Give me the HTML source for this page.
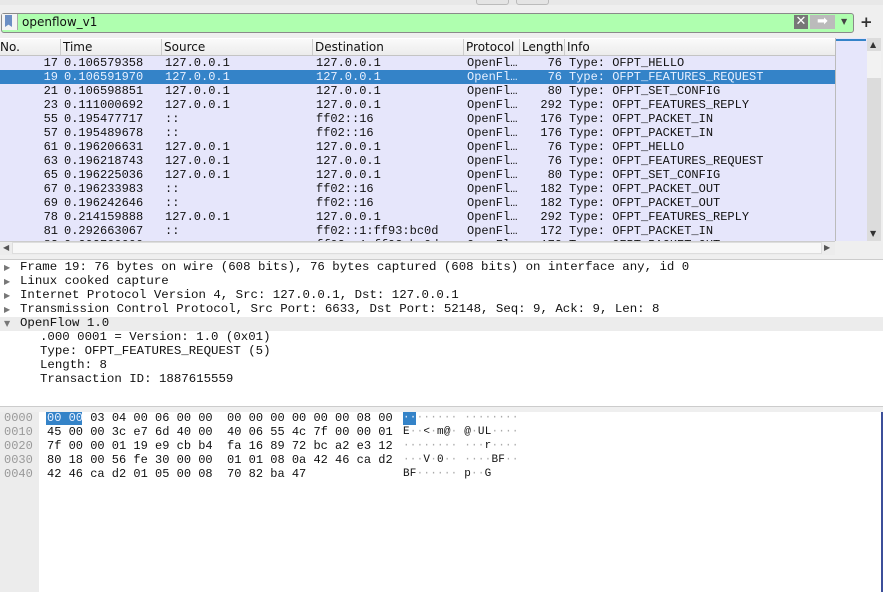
<!DOCTYPE html>
<html><head><style>
body{margin:0;width:883px;height:592px;background:#efefef;position:relative;overflow:hidden;font-family:"Liberation Mono","DejaVu Sans Mono",monospace;font-size:12px;color:#111}
.a{position:absolute}
.sans{font-family:"DejaVu Sans","Liberation Sans",sans-serif}
.row{position:absolute;left:0;width:835px;height:14px;line-height:14px;background:#e6e6fb;white-space:pre}
.row.sel{background:#3483c8;color:#e8f0ff}
.row span{position:absolute;top:0}
.dl{position:absolute;left:20px;height:14px;line-height:14px;white-space:pre;font-size:12.4px}
.ar{position:absolute;left:4px;font:8px/14px 'DejaVu Sans';color:#777}
.dot{color:#aaa}
</style></head><body>
<div class="a" style="left:0;top:0;width:883px;height:5px;background:#e8e8e8"></div>
<div class="a" style="left:476px;top:-4px;width:31px;height:7px;border:1px solid #bbb;border-radius:3px;background:#e4e4e4"></div>
<div class="a" style="left:516px;top:-4px;width:31px;height:7px;border:1px solid #bbb;border-radius:3px;background:#e4e4e4"></div>
<div class="a" style="left:1px;top:13px;width:851px;height:18px;border:1px solid #8a8a8a;border-radius:3px;background:#afffaf"></div>
<div class="a" style="left:2px;top:14px;width:15px;height:16px;background:#f4f4f4;border-right:1px solid #aaa"></div>
<div class="a" style="left:5px;top:15px;width:7px;height:12px;background:#6c8fc4;clip-path:polygon(0 0,100% 0,100% 100%,50% 80%,0 100%)"></div>
<div class="a sans" style="left:22px;top:14px;font-size:12px;line-height:16px">openflow_v1</div>
<div class="a" style="left:794px;top:15px;width:14px;height:14px;background:#777;color:#fff;font:bold 13px/14px 'DejaVu Sans';text-align:center">✕</div>
<div class="a" style="left:810px;top:15px;width:25px;height:14px;background:#bbb;color:#fff;font:bold 13px/14px 'DejaVu Sans';text-align:center">➡</div>
<div class="a" style="left:841px;top:17px;font:8px 'DejaVu Sans';color:#444">▼</div>
<div class="a" style="left:860px;top:12px;font:bold 15px/20px 'DejaVu Sans';color:#333">+</div>
<div class="a" style="left:0;top:38px;width:867px;height:203px;background:#fff"></div>
<div class="a sans" style="left:0;top:39px;width:835px;height:16px;background:linear-gradient(#fafafa,#ececec);border-bottom:1px solid #c4c4c4;font-size:12px;line-height:16px">
<span class="a" style="left:0">No.</span><span class="a" style="left:60px;border-left:1px solid #ccc;padding-left:2px">Time</span><span class="a" style="left:161px;border-left:1px solid #ccc;padding-left:2px">Source</span><span class="a" style="left:312px;border-left:1px solid #ccc;padding-left:2px">Destination</span><span class="a" style="left:463px;border-left:1px solid #ccc;padding-left:2px">Protocol</span><span class="a" style="left:519px;border-left:1px solid #ccc;padding-left:2px;width:43px;overflow:hidden;white-space:nowrap">Length</span><span class="a" style="left:564px;border-left:1px solid #ccc;padding-left:2px">Info</span></div>
<div class="a" style="left:0;top:56px;width:835px;height:185px;overflow:hidden">
<div class="row" style="top:0"><span style="left:0;width:58px;text-align:right">17</span><span style="left:64px">0.106579358</span><span style="left:165px">127.0.0.1</span><span style="left:316px">127.0.0.1</span><span style="left:467px">OpenFl…</span><span style="left:520px;width:42px;text-align:right">76</span><span style="left:569px">Type: OFPT_HELLO</span></div>
<div class="row sel" style="top:14px"><span style="left:0;width:58px;text-align:right">19</span><span style="left:64px">0.106591970</span><span style="left:165px">127.0.0.1</span><span style="left:316px">127.0.0.1</span><span style="left:467px">OpenFl…</span><span style="left:520px;width:42px;text-align:right">76</span><span style="left:569px">Type: OFPT_FEATURES_REQUEST</span></div>
<div class="row" style="top:28px"><span style="left:0;width:58px;text-align:right">21</span><span style="left:64px">0.106598851</span><span style="left:165px">127.0.0.1</span><span style="left:316px">127.0.0.1</span><span style="left:467px">OpenFl…</span><span style="left:520px;width:42px;text-align:right">80</span><span style="left:569px">Type: OFPT_SET_CONFIG</span></div>
<div class="row" style="top:42px"><span style="left:0;width:58px;text-align:right">23</span><span style="left:64px">0.111000692</span><span style="left:165px">127.0.0.1</span><span style="left:316px">127.0.0.1</span><span style="left:467px">OpenFl…</span><span style="left:520px;width:42px;text-align:right">292</span><span style="left:569px">Type: OFPT_FEATURES_REPLY</span></div>
<div class="row" style="top:56px"><span style="left:0;width:58px;text-align:right">55</span><span style="left:64px">0.195477717</span><span style="left:165px">::</span><span style="left:316px">ff02::16</span><span style="left:467px">OpenFl…</span><span style="left:520px;width:42px;text-align:right">176</span><span style="left:569px">Type: OFPT_PACKET_IN</span></div>
<div class="row" style="top:70px"><span style="left:0;width:58px;text-align:right">57</span><span style="left:64px">0.195489678</span><span style="left:165px">::</span><span style="left:316px">ff02::16</span><span style="left:467px">OpenFl…</span><span style="left:520px;width:42px;text-align:right">176</span><span style="left:569px">Type: OFPT_PACKET_IN</span></div>
<div class="row" style="top:84px"><span style="left:0;width:58px;text-align:right">61</span><span style="left:64px">0.196206631</span><span style="left:165px">127.0.0.1</span><span style="left:316px">127.0.0.1</span><span style="left:467px">OpenFl…</span><span style="left:520px;width:42px;text-align:right">76</span><span style="left:569px">Type: OFPT_HELLO</span></div>
<div class="row" style="top:98px"><span style="left:0;width:58px;text-align:right">63</span><span style="left:64px">0.196218743</span><span style="left:165px">127.0.0.1</span><span style="left:316px">127.0.0.1</span><span style="left:467px">OpenFl…</span><span style="left:520px;width:42px;text-align:right">76</span><span style="left:569px">Type: OFPT_FEATURES_REQUEST</span></div>
<div class="row" style="top:112px"><span style="left:0;width:58px;text-align:right">65</span><span style="left:64px">0.196225036</span><span style="left:165px">127.0.0.1</span><span style="left:316px">127.0.0.1</span><span style="left:467px">OpenFl…</span><span style="left:520px;width:42px;text-align:right">80</span><span style="left:569px">Type: OFPT_SET_CONFIG</span></div>
<div class="row" style="top:126px"><span style="left:0;width:58px;text-align:right">67</span><span style="left:64px">0.196233983</span><span style="left:165px">::</span><span style="left:316px">ff02::16</span><span style="left:467px">OpenFl…</span><span style="left:520px;width:42px;text-align:right">182</span><span style="left:569px">Type: OFPT_PACKET_OUT</span></div>
<div class="row" style="top:140px"><span style="left:0;width:58px;text-align:right">69</span><span style="left:64px">0.196242646</span><span style="left:165px">::</span><span style="left:316px">ff02::16</span><span style="left:467px">OpenFl…</span><span style="left:520px;width:42px;text-align:right">182</span><span style="left:569px">Type: OFPT_PACKET_OUT</span></div>
<div class="row" style="top:154px"><span style="left:0;width:58px;text-align:right">78</span><span style="left:64px">0.214159888</span><span style="left:165px">127.0.0.1</span><span style="left:316px">127.0.0.1</span><span style="left:467px">OpenFl…</span><span style="left:520px;width:42px;text-align:right">292</span><span style="left:569px">Type: OFPT_FEATURES_REPLY</span></div>
<div class="row" style="top:168px"><span style="left:0;width:58px;text-align:right">81</span><span style="left:64px">0.292663067</span><span style="left:165px">::</span><span style="left:316px">ff02::1:ff93:bc0d</span><span style="left:467px">OpenFl…</span><span style="left:520px;width:42px;text-align:right">172</span><span style="left:569px">Type: OFPT_PACKET_IN</span></div>
<div class="row" style="top:182px"><span style="left:0;width:58px;text-align:right">83</span><span style="left:64px">0.292700000</span><span style="left:165px">::</span><span style="left:316px">ff02::1:ff93:bc0d</span><span style="left:467px">OpenFl…</span><span style="left:520px;width:42px;text-align:right">172</span><span style="left:569px">Type: OFPT_PACKET_OUT</span></div>
</div>
<div class="a" style="left:835px;top:38px;width:31px;height:203px;background:#e6e6fb;border-left:1px solid #bbb;border-right:1px solid #bbb"></div>
<div class="a" style="left:836px;top:39px;width:30px;height:2px;background:#3483c8"></div>
<div class="a" style="left:867px;top:38px;width:14px;height:203px;background:#dcdcdc"></div>
<div class="a" style="left:867px;top:51px;width:14px;height:27px;background:#f2f2f2"></div>
<div class="a" style="left:870px;top:40px;font:8px 'DejaVu Sans';color:#333">▲</div>
<div class="a" style="left:870px;top:229px;font:8px 'DejaVu Sans';color:#333">▼</div>
<div class="a" style="left:0;top:241px;width:835px;height:13px;background:#ececec;border-top:1px solid #ccc"></div>
<div class="a" style="left:12px;top:242px;width:810px;height:12px;background:#f7f7f7;border:1px solid #ddd;box-sizing:border-box"></div>
<div class="a" style="left:3px;top:242px;font:8px/12px 'DejaVu Sans';color:#555">◀</div>
<div class="a" style="left:824px;top:242px;font:8px/12px 'DejaVu Sans';color:#555">▶</div>
<div class="a" style="left:0;top:259px;width:883px;height:147px;background:#fff;border-top:1px solid #ccc"></div>
<div class="a" style="left:0;top:317px;width:883px;height:14px;background:#ececec"></div>
<div class="ar" style="top:261px">▶</div><div class="dl" style="top:260px">Frame 19: 76 bytes on wire (608 bits), 76 bytes captured (608 bits) on interface any, id 0</div>
<div class="ar" style="top:275px">▶</div><div class="dl" style="top:274px">Linux cooked capture</div>
<div class="ar" style="top:289px">▶</div><div class="dl" style="top:288px">Internet Protocol Version 4, Src: 127.0.0.1, Dst: 127.0.0.1</div>
<div class="ar" style="top:303px">▶</div><div class="dl" style="top:302px">Transmission Control Protocol, Src Port: 6633, Dst Port: 52148, Seq: 9, Ack: 9, Len: 8</div>
<div class="ar" style="top:317px">▼</div><div class="dl" style="top:316px">OpenFlow 1.0</div>
<div class="dl" style="top:330px;left:40px">.000 0001 = Version: 1.0 (0x01)</div>
<div class="dl" style="top:344px;left:40px">Type: OFPT_FEATURES_REQUEST (5)</div>
<div class="dl" style="top:358px;left:40px">Length: 8</div>
<div class="dl" style="top:372px;left:40px">Transaction ID: 1887615559</div>
<div class="a" style="left:0;top:406px;width:883px;height:5px;background:#efefef;border-top:1px solid #ccc;border-bottom:1px solid #ccc"></div>
<div class="a" style="left:0;top:412px;width:881px;height:180px;background:#fff"></div>
<div class="a" style="left:0;top:412px;width:39px;height:180px;background:#ececec"></div>
<div class="a" style="left:881px;top:412px;width:2px;height:180px;background:#3c4f9a"></div>
<div class="a" style="left:4px;top:411px;line-height:14px;white-space:pre;color:#999">0000
0010
0020
0030
0040</div>
<div class="a" style="left:46px;top:412px;width:36px;height:13px;background:#3483c8"></div>
<div class="a" style="left:403px;top:412px;width:13px;height:13px;background:#3483c8"></div>
<div class="a" style="left:47px;top:411px;line-height:14px;white-space:pre"><span style="color:#e8f0ff">00 00</span> 03 04 00 06 00 00  00 00 00 00 00 00 08 00
45 00 00 3c e7 6d 40 00  40 06 55 4c 7f 00 00 01
7f 00 00 01 19 e9 cb b4  fa 16 89 72 bc a2 e3 12
80 18 00 56 fe 30 00 00  01 01 08 0a 42 46 ca d2
42 46 ca d2 01 05 00 08  70 82 ba 47</div>
<div class="a" style="left:403px;top:411px;line-height:14px;white-space:pre;font-size:11px;letter-spacing:0.2px"><span style="color:#e8f0ff">··</span><span class="dot">······ ········</span>
E<span class="dot">··</span>&lt;<span class="dot">·</span>m@<span class="dot">·</span> @<span class="dot">·</span>UL<span class="dot">····</span>
<span class="dot">········ ···</span>r<span class="dot">····</span>
<span class="dot">···</span>V<span class="dot">·</span>0<span class="dot">··</span> <span class="dot">····</span>BF<span class="dot">··</span>
BF<span class="dot">······</span> p<span class="dot">··</span>G</div>
</body></html>
